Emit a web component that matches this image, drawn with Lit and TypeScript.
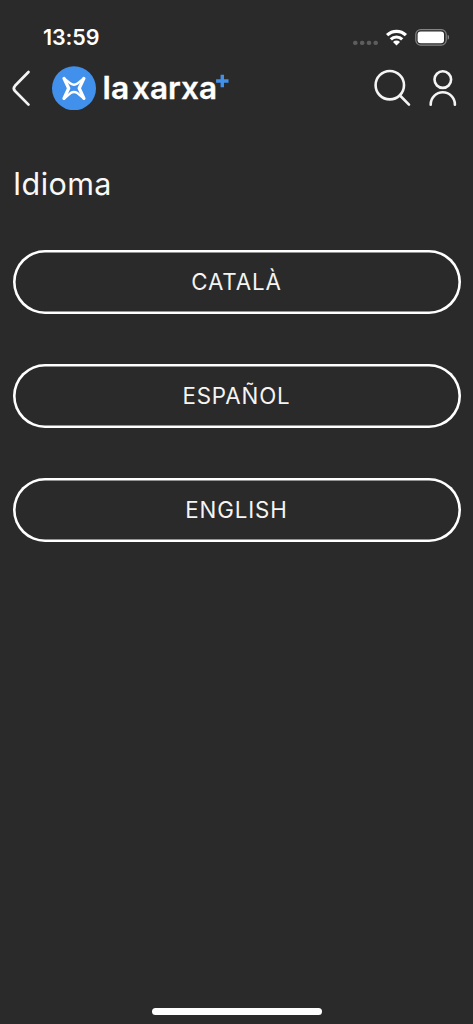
import { LitElement, html, css, svg } from "lit";
import { customElement, state } from "lit/decorators.js";

@customElement("status-bar")
class StatusBar extends LitElement {
  static styles = css`
    :host { display: flex; justify-content: space-between; height: 60px; box-sizing: border-box; padding: 24px 24px 0 43px; }
    .time { font-size: 21.5px; font-weight: 600; line-height: 27px; letter-spacing: -0.1px; }
    .signals { width: 98px; height: 24px; display: block; }
  `;
  render() {
    return html`
      <span class="time">13:59</span>
      <svg class="signals" viewBox="351 24 98 24" fill="none">
        <g fill="#5d5d5d">
          ${[355.3, 362.2, 369, 375.7].map((x) => svg`<rect x=${x - 2.2} y="40.7" width="4.4" height="4.4" rx="1.8"/>`)}
        </g>
        <g stroke="#fff" stroke-width="3.2">
          <path d="M387.1 35.2A13.4 13.4 0 0 1 405.9 35.2"/>
          <path d="M390.8 39.4A8 8 0 0 1 402.2 39.4"/>
        </g>
        <path d="M396.5 45.4L393 42A4.9 4.9 0 0 1 400 42Z" fill="#fff"/>
        <rect x="415.8" y="29.7" width="30.4" height="15.4" rx="4.8" stroke="#858585" stroke-width="1.2"/>
        <rect x="417.6" y="31.6" width="26.4" height="11.6" rx="3" fill="#fff"/>
        <path d="M447.6 34.8C449.8 35.6 449.8 39 447.6 39.8Z" fill="#858585"/>
      </svg>
    `;
  }
}

@customElement("app-header")
class AppHeader extends LitElement {
  static styles = css`
    :host { display: flex; align-items: center; height: 56px; box-sizing: border-box; padding: 0 15px 0 10px; }
    svg { display: block; flex: none; }
    .back { width: 24px; height: 44px; }
    .badge { width: 44px; height: 44px; margin-left: 18px; }
    .wordmark { width: 132px; height: 44px; margin-left: 4px; }
    .word { font-family: Inter, sans-serif; font-size: 31.5px; font-weight: 600; fill: #fff; stroke: #fff; stroke-width: 0.3px; }
    .tools { margin-left: auto; display: flex; }
    .search { width: 46px; height: 44px; }
    .user { width: 36px; height: 44px; margin-left: 5px; }
  `;
  render() {
    return html`
      <svg class="back" viewBox="10 66 24 44" fill="none" stroke="#f4f4f4" stroke-width="2.7" stroke-linecap="round" stroke-linejoin="round">
        <path d="M28.5 72L15 85.8Q12.6 88.4 15 91L28.5 104.6"/>
      </svg>
      <svg class="badge" viewBox="52 66 44 44" fill="none" stroke="#fff" stroke-linecap="round" stroke-linejoin="round">
        <circle cx="74" cy="88.3" r="22" fill="#4190ec" stroke="none"/>
        <path stroke-width="3.3" d="M64 78.4L68.7 88.3L64 98.4M83.9 78.4L79.2 88.3L83.9 98.4"/>
        <path stroke-width="2.4" d="M64.4 78.6L70.6 83.6Q74 85.8 77.4 83.6L83.4 78.6M64.4 98.2L70.6 93.1Q74 90.9 77.4 93.1L83.4 98.2"/>
      </svg>
      <svg class="wordmark" viewBox="100 66 132 44">
        <text class="word" x="102.6" y="98.6" textLength="26.6" lengthAdjust="spacingAndGlyphs">la</text>
        <text class="word" x="132" y="98.6" textLength="85" lengthAdjust="spacingAndGlyphs">xarxa</text>
        <path d="M222.3 74.8V87.2M216.1 81H228.5" stroke="#4190ec" stroke-width="3.4"/>
      </svg>
      <div class="tools">
        <svg class="search" viewBox="371 66 46 44" fill="none" stroke="#f4f4f4" stroke-width="2.6" stroke-linecap="round">
          <circle cx="389.8" cy="85.2" r="14.2"/><path d="M400 95.5L409 104.6"/>
        </svg>
        <svg class="user" viewBox="422 66 36 44" fill="none" stroke="#f4f4f4" stroke-width="2.6" stroke-linecap="round">
          <circle cx="442.8" cy="79.6" r="8.3"/><path d="M430.7 104.8V104.4A12.1 12.1 0 0 1 454.9 104.4V104.8"/>
        </svg>
      </div>
    `;
  }
}

@customElement("app-root")
class AppRoot extends LitElement {
  static styles = css`
    :host { display: flex; flex-direction: column; height: 1024px; background: #2a2a2a; color: #fff; font-family: Inter, sans-serif; overflow: hidden; }
    main { flex: 1; padding: 50px 12.5px 0; }
    h1 { margin: 0; padding-left: 0.5px; font-size: 30.5px; font-weight: 400; line-height: 36px; letter-spacing: 0.4px; color: #f8f8f8; }
    .languages { display: grid; gap: 50.5px; margin-top: 48px; }
    .language { height: 63.5px; box-sizing: border-box; border: 0; box-shadow: inset 0 0 0 2.6px #fff; border-radius: 32px; padding: 1px 0 0; background: none; color: #f4f4f4; font: 400 22.3px/26px Inter, sans-serif; letter-spacing: 0.85px; }
    .home { width: 170px; height: 7px; border-radius: 4px; background: #fff; margin: 0 auto 9px; }
  `;
  @state() private languages = ["CATALÀ", "ESPAÑOL", "ENGLISH"];
  render() {
    return html`
      <status-bar></status-bar>
      <app-header></app-header>
      <main>
        <h1>Idioma</h1>
        <div class="languages">
          ${this.languages.map((name) => html`<button class="language">${name}</button>`)}
        </div>
      </main>
      <div class="home"></div>
    `;
  }
}
